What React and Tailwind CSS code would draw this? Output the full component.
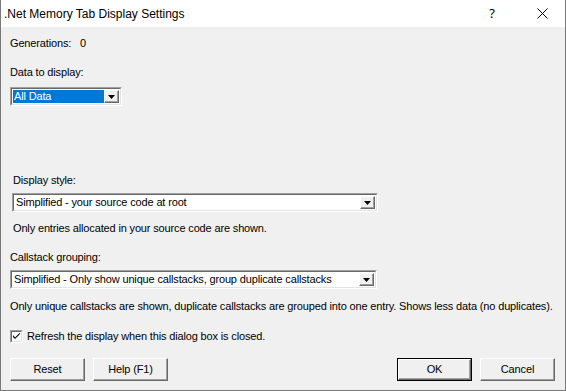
import React from "react";

const font = { fontFamily: '"Liberation Sans", Arial, sans-serif' };

function Arrow() {
  return (
    <svg width="7" height="4" viewBox="0 0 7 4">
      <path d="M0 0h7L3.5 4z" fill="#000" />
    </svg>
  );
}

function Combo({ value, width, selected }) {
  return (
    <div
      className="flex h-[19px] border-t border-l border-[#a0a0a0] border-r-white border-b-white border-r border-b"
      style={{ width }}
    >
      <div className="flex flex-1 min-w-0 border-t border-l border-[#696969] border-r border-b border-r-[#e3e3e3] border-b-[#e3e3e3] bg-white p-[1px]">
        <div
          className={
            "flex-1 min-w-0 flex items-center pl-[1px] text-[11px] leading-[13px] tracking-[-0.15px] whitespace-nowrap overflow-hidden " +
            (selected ? "bg-[#0078d7] text-white" : "text-black")
          }
        >
          {value}
        </div>
        <div className="w-[15px] h-full flex items-center justify-center bg-[#f0f0f0] border-t border-l border-white border-r border-b border-r-[#696969] border-b-[#696969] shadow-[inset_-1px_-1px_0_#a0a0a0]">
          <Arrow />
        </div>
      </div>
    </div>
  );
}

function Button({ children, def }) {
  return (
    <div className={"w-[75px] h-[23px] " + (def ? "border border-[#000]" : "")}>
      <div className="w-full h-full flex items-center justify-center bg-[#f0f0f0] border-t border-l border-white border-r border-b border-r-[#696969] border-b-[#696969] shadow-[inset_-1px_-1px_0_#a0a0a0] text-[11px] tracking-[-0.15px] text-black">
        {children}
      </div>
    </div>
  );
}

export default function App() {
  return (
    <div
      className="w-[566px] h-[391px] bg-[#f0f0f0] border-x border-b border-[#7a7a7a] flex flex-col"
      style={font}
    >
      <div className="h-[27px] bg-white flex items-center shrink-0">
        <div className="pl-[3px] text-[12px] text-black">
          .Net Memory Tab Display Settings
        </div>
        <div className="ml-auto flex items-center h-full">
          <div
            className="w-[46px] text-center text-[13px] text-black"
            style={{ fontFamily: '"Noto Sans", sans-serif' }}
          >
            ?
          </div>
          <div className="w-[46px] h-full flex items-center justify-center ml-[4px]">
            <svg width="11" height="11" viewBox="0 0 11 11">
              <path d="M0.5 0.5L10.5 10.5M10.5 0.5L0.5 10.5" stroke="#000" strokeWidth="1" />
            </svg>
          </div>
        </div>
      </div>

      <div className="flex flex-col px-[9px] text-[11px] leading-[13px] tracking-[-0.15px] text-black">
        <div className="mt-[10px] h-[13px] whitespace-nowrap">
          Generations:&nbsp;&nbsp;&nbsp;0
        </div>
        <div className="mt-[16px] h-[13px]">Data to display:</div>
        <div className="mt-[8px]">
          <Combo value="All Data" width={112} selected />
        </div>

        <div className="mt-[68px] h-[13px] pl-[3px]">Display style:</div>
        <div className="mt-[6px] pl-[2px]">
          <Combo value="Simplified - your source code at root" width={366} />
        </div>
        <div className="mt-[10px] h-[13px] pl-[3px]">
          Only entries allocated in your source code are shown.
        </div>

        <div className="mt-[16px] h-[13px]">Callstack grouping:</div>
        <div className="mt-[6px]">
          <Combo
            value="Simplified - Only show unique callstacks, group duplicate callstacks"
            width={367}
          />
        </div>
        <div className="mt-[11px] h-[13px] whitespace-nowrap">
          Only unique callstacks are shown, duplicate callstacks are grouped into one entry. Shows less data (no duplicates).
        </div>

        <div className="mt-[17px] h-[13px] flex items-center">
          <div className="w-[13px] h-[13px] border-t border-l border-[#a0a0a0] border-r border-b border-r-white border-b-white">
            <div className="w-full h-full bg-white border-t border-l border-[#696969] border-r border-b border-r-[#e3e3e3] border-b-[#e3e3e3] flex items-center justify-center">
              <svg width="7" height="7" viewBox="0 0 7 7">
                <path d="M0 2v2l2 2 5-5v-1.5L2 4.5z" fill="#000" />
              </svg>
            </div>
          </div>
          <div className="ml-[4px]">Refresh the display when this dialog box is closed.</div>
        </div>

        <div className="mt-[15px] flex">
          <Button>Reset</Button>
          <div className="ml-[8px]">
            <Button>Help (F1)</Button>
          </div>
          <div className="ml-auto mr-[1px] flex gap-[8px]">
            <Button def>OK</Button>
            <Button>Cancel</Button>
          </div>
        </div>
      </div>
    </div>
  );
}
